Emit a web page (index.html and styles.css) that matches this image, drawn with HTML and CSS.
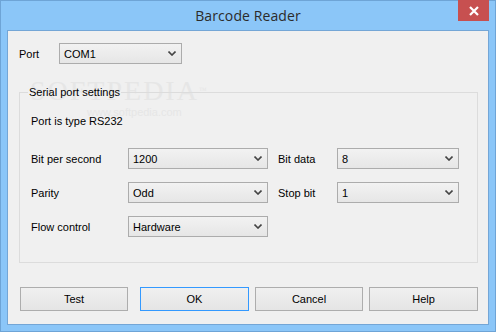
FILE: index.html
```html
<html>
<head>
<link rel="stylesheet" href="styles.css">
</head>
<body>

<div class="window">
  <div class="titlebar">
    <span></span>
    <div class="title">Barcode Reader</div>
    <button class="close" title="Close">
      <svg width="10" height="10" viewBox="0 0 10 10"><path d="M1 1 L9 9 M9 1 L1 9" stroke="#fff" stroke-width="2.2"/></svg>
    </button>
  </div>

  <div class="dialog">
    <div class="watermark">
      <span class="wm-big">SOFTPEDIA<sup>™</sup></span>
      <span class="wm-small">www.softpedia.com</span>
    </div>

    <div class="port-row">
      <label class="port-label">Port</label>
      <div class="combo port-combo">COM1<svg class="arrow" width="8" height="5" viewBox="0 0 8 5"><path d="M0.5 0.5 L4 4 L7.5 0.5" fill="none" stroke="#444" stroke-width="1.6"/></svg></div>
    </div>

    <fieldset class="group">
      <legend>Serial port settings</legend>
      <p class="note">Port is type RS232</p>
      <div class="settings">
        <label>Bit per second</label>
        <div class="combo">1200<svg class="arrow" width="8" height="5" viewBox="0 0 8 5"><path d="M0.5 0.5 L4 4 L7.5 0.5" fill="none" stroke="#444" stroke-width="1.6"/></svg></div>
        <label class="second">Bit data</label>
        <div class="combo">8<svg class="arrow" width="8" height="5" viewBox="0 0 8 5"><path d="M0.5 0.5 L4 4 L7.5 0.5" fill="none" stroke="#444" stroke-width="1.6"/></svg></div>

        <label>Parity</label>
        <div class="combo">Odd<svg class="arrow" width="8" height="5" viewBox="0 0 8 5"><path d="M0.5 0.5 L4 4 L7.5 0.5" fill="none" stroke="#444" stroke-width="1.6"/></svg></div>
        <label class="second">Stop bit</label>
        <div class="combo">1<svg class="arrow" width="8" height="5" viewBox="0 0 8 5"><path d="M0.5 0.5 L4 4 L7.5 0.5" fill="none" stroke="#444" stroke-width="1.6"/></svg></div>

        <label>Flow control</label>
        <div class="combo">Hardware<svg class="arrow" width="8" height="5" viewBox="0 0 8 5"><path d="M0.5 0.5 L4 4 L7.5 0.5" fill="none" stroke="#444" stroke-width="1.6"/></svg></div>
      </div>
    </fieldset>

    <div class="buttons">
      <button class="btn test">Test</button>
      <button class="btn default">OK</button>
      <button class="btn">Cancel</button>
      <button class="btn last">Help</button>
    </div>
  </div>
</div>

</body>
</html>
```

FILE: styles.css
```css
body {
	margin:0;
	font-family:"Liberation Sans", Arial, sans-serif;
	font-size:11px;
	color:#000;
}
.window {
	width:496px;
	height:332px;
	box-sizing:border-box;
	border:1px solid #6ea4d6;
	background:#8bc6f8;
	padding:0 6px 6px 6px;
	display:flex;
	flex-direction:column;
}
.titlebar {
	height:29px;
	display:grid;
	grid-template-columns:1fr auto 1fr;
	align-items:start;
}
.title {
	font-family:"Open Sans", "Noto Sans", sans-serif;
	font-size:14px;
	color:#2b2b2b;
	line-height:29px;
	letter-spacing:0.1px;
}
.close {
	justify-self:end;
	margin-top:-1px;
	width:31px;
	height:21px;
	border:0;
	padding:0;
	background:#c75050;
	display:flex;
	align-items:center;
	justify-content:center;
}
.dialog {
	position:relative;
	flex:1;
	background:#f0f0f0;
	border:1px solid #74a6d6;
	padding:12px 10px 0 11px;
}
.port-row,
.group,
.buttons {
	position:relative;
}
.port-row {
	display:flex;
	align-items:center;
	height:21px;
}
.port-label {
	width:40px;
}
.combo {
	box-sizing:border-box;
	height:21px;
	border:1px solid #acacac;
	background:linear-gradient(#f2f2f2, #e6e6e6);
	padding:0 5px 0 4px;
	display:flex;
	align-items:center;
	justify-content:space-between;
	color:#000;
}
.port-combo {
	width:123px;
}
.group {
	margin:21px 0 0 0;
	width:459px;
	height:178px;
	box-sizing:border-box;
	border:1px solid #dcdcdc;
	padding:0 10px 0 11px;
}
.group legend {
	padding:0 1px;
	margin-left:-3px;
	line-height:14px;
}
.note {
	margin:15px 0 0 0;
	line-height:14px;
}
.settings {
	margin-top:20px;
	display:grid;
	grid-template-columns:97px 140px 69px 122px;
	row-gap:13px;
	grid-auto-rows:21px;
	align-items:center;
}
.settings .second {
	padding-left:10px;
}
.buttons {
	margin-top:24px;
	padding-left:1px;
	display:flex;
	gap:6px;
}
.btn {
	width:108px;
	height:24px;
	box-sizing:border-box;
	border:1px solid #adadad;
	background:linear-gradient(#f0f0f0, #e5e5e5);
	font-family:"Liberation Sans", Arial, sans-serif;
	font-size:11px;
	color:#000;
	padding:0;
}
.btn.test {
	margin-right:6px;
}
.btn.default {
	border-color:#3399ff;
	width:109px;
}
.btn.last {
	width:109px;
}
.watermark {
	position:absolute;
	left:22px;
	top:46px;
	display:flex;
	flex-direction:column;
	align-items:center;
	color:#e6e6e6;
	pointer-events:none;
}
.wm-big {
	font-family:"Liberation Serif", serif;
	font-size:28px;
	letter-spacing:2px;
	line-height:28px;
}
.wm-big sup {
	font-size:8px;
	vertical-align:top;
}
.wm-small {
	font-size:11px;
	line-height:14px;
	margin-left:30px;
}
```
